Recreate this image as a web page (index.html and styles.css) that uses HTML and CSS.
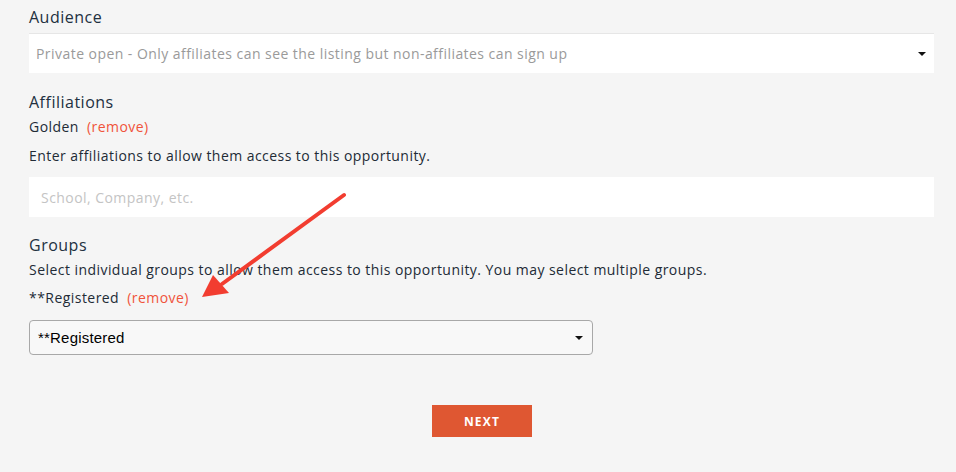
FILE: index.html
```html
<!DOCTYPE html>
<html>
<head>
<meta charset="utf-8">
<link rel="stylesheet" href="styles.css">
</head>
<body>
<div class="page">
  <div class="field">
    <div class="label">Audience</div>
    <div class="select-white">
      <span>Private open - Only affiliates can see the listing but non-affiliates can sign up</span>
      <span class="caret"></span>
    </div>
  </div>

  <div class="field affil">
    <div class="label">Affiliations</div>
    <div class="tag">Golden <span class="remove">(remove)</span></div>
    <div class="help">Enter affiliations to allow them access to this opportunity.</div>
    <div class="input">School, Company, etc.</div>
  </div>

  <div class="field groups">
    <div class="label">Groups</div>
    <div class="help first">Select individual groups to allow them access to this opportunity. You may select multiple groups.</div>
    <div class="tag reg">**Registered <span class="remove">(remove)</span></div>
    <div class="select-gray">
      <span>**Registered</span>
      <span class="caret"></span>
    </div>
  </div>

  <div class="actions">
    <button class="next">NEXT</button>
  </div>
</div>
<svg class="arrow" width="956" height="472" viewBox="0 0 956 472">
  <line x1="344" y1="195" x2="222" y2="284" stroke="#f23d30" stroke-width="4" stroke-linecap="round"/>
  <polygon points="202,297 213,275 229,293" fill="#f23d30"/>
</svg>
</body>
</html>
```

FILE: styles.css
```css
html, body {
  margin: 0;
  padding: 0;
  background: #f5f5f5;
}
body {
  position: relative;
  width: 956px;
  height: 472px;
  overflow: hidden;
  font-family: "Open Sans", "Liberation Sans", sans-serif;
  color: #222b36;
  letter-spacing: 0.45px;
}
.page {
  padding: 7px 22px 0 29px;
  display: flex;
  flex-direction: column;
}
.field {
  display: flex;
  flex-direction: column;
}
.label {
  font-size: 16px;
  line-height: 20px;
  letter-spacing: 0.5px;
  color: #22303f;
}
.select-white {
  margin-top: 6px;
  height: 40px;
  background: #fff;
  border-top: 1px solid #e6e6e6;
  box-sizing: border-box;
  display: flex;
  align-items: center;
  justify-content: space-between;
  padding: 0 8px 0 7px;
  font-size: 14px;
  color: #9a9a9a;
}
.caret {
  width: 0;
  height: 0;
  border-left: 4px solid transparent;
  border-right: 4px solid transparent;
  border-top: 4px solid #111;
}
.affil {
  margin-top: 19px;
}
.tag {
  margin-top: 5px;
  font-size: 14px;
  line-height: 20px;
}
.remove {
  color: #f0533a;
  margin-left: 4px;
}
.help {
  margin-top: 9px;
  font-size: 14px;
  line-height: 20px;
}
.input {
  margin-top: 11px;
  height: 40px;
  background: #fff;
  display: flex;
  align-items: center;
  padding-left: 12px;
  font-size: 14px;
  color: #c4c4c4;
}
.groups {
  margin-top: 18px;
}
.help.first {
  margin-top: 5px;
}
.tag.reg {
  margin-top: 8px;
}
.select-gray {
  margin-top: 12px;
  width: 564px;
  height: 35px;
  box-sizing: border-box;
  border: 1px solid #a8a8a8;
  border-radius: 4px;
  background: #f8f8f8;
  display: flex;
  align-items: center;
  justify-content: space-between;
  padding: 0 9px 0 8px;
  font-family: "Liberation Sans", Arial, sans-serif;
  font-size: 15px;
  letter-spacing: 0.2px;
  color: #000;
}
.actions {
  margin-top: 50px;
  display: flex;
  padding-left: 403px;
}
.next {
  width: 100px;
  height: 32px;
  border: none;
  background: #df5732;
  color: #fff;
  font-family: "Open Sans", sans-serif;
  font-weight: 700;
  font-size: 12px;
  letter-spacing: 1.2px;
  padding: 0;
}
.arrow {
  position: absolute;
  left: 0;
  top: 0;
  pointer-events: none;
}
```
